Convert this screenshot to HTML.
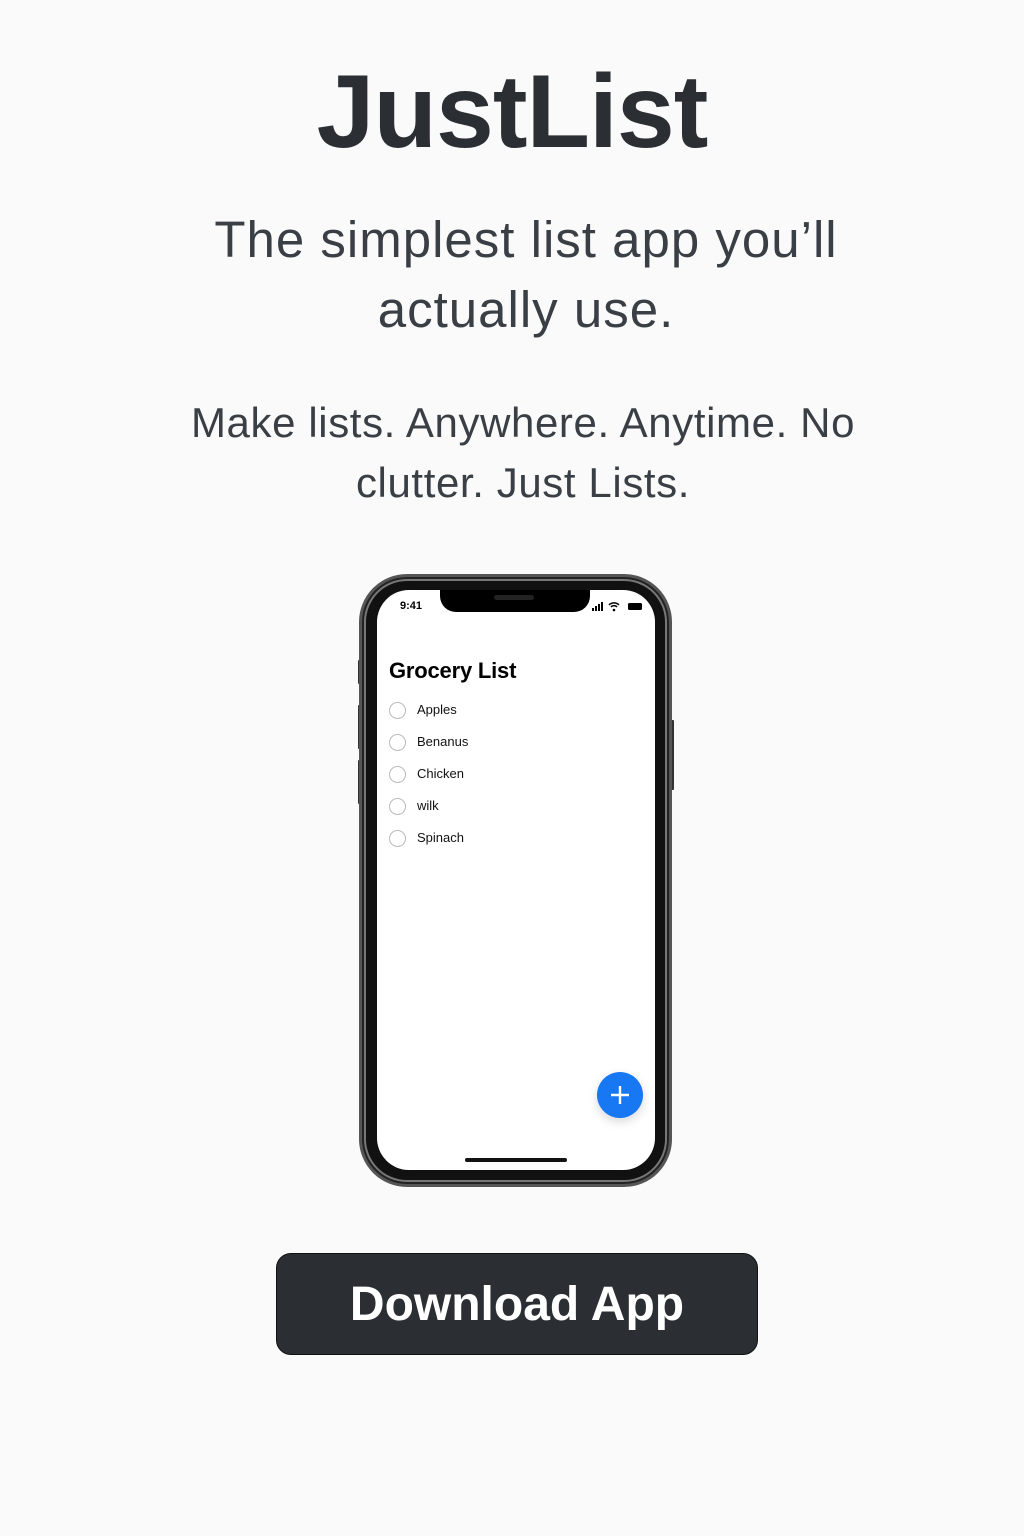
<!DOCTYPE html>
<html><head><meta charset="utf-8"><style>
*{margin:0;padding:0;box-sizing:border-box}
body{width:1024px;height:1536px;background:#fafafa;position:relative;overflow:hidden;font-family:"Liberation Sans",sans-serif;color:#2b2f33}
.c{position:absolute;left:0;width:1024px;text-align:center}
h1{font-size:104px;font-weight:bold;letter-spacing:-1px;top:57px;line-height:110px;left:-3px}
.sub{font-size:51px;line-height:70px;top:205px;color:#3a3f45;letter-spacing:1px;left:14px}
.tag{font-size:42px;line-height:60px;top:393px;color:#3a3f45;letter-spacing:0.6px;left:11px}
.phone{position:absolute;left:359px;top:574px;width:313px;height:613px;border-radius:48px;background:#111;border:3px solid #555;box-shadow:inset 0 0 0 2px #222,inset 0 0 0 4px #777}
.screen{position:absolute;left:377px;top:590px;width:278px;height:580px;background:#fff;border-radius:32px;overflow:hidden}
.notch{position:absolute;left:63px;top:0;width:150px;height:22px;background:#000;border-radius:0 0 16px 16px}
.btn{position:absolute;left:358px;width:3px;background:#333;border-radius:1px}
.item{position:absolute;left:12px;font-size:13px;color:#111;height:18px;line-height:18px}
.item span{display:inline-block;width:17px;height:17px;border:1px solid #bbb;border-radius:50%;vertical-align:middle;margin-right:11px}
.dl{position:absolute;left:276px;top:1253px;width:482px;height:102px;background:#2b2f33;border:1px solid #111;border-radius:15px;color:#fff;font-size:48px;font-weight:bold;text-align:center;line-height:102px}
</style></head><body>
<h1 class="c">JustList</h1>
<div class="c sub">The simplest list app you’ll<br>actually use.</div>
<div class="c tag">Make lists. Anywhere. Anytime. No<br>clutter. Just Lists.</div>
<div class="btn" style="top:660px;height:24px"></div>
<div class="btn" style="top:705px;height:44px"></div>
<div class="btn" style="top:760px;height:44px"></div>
<div class="btn" style="left:671px;top:720px;height:70px"></div>
<div class="phone"></div>
<div class="screen">
 <div class="notch"><div style="position:absolute;left:54px;top:5px;width:40px;height:5px;background:#222;border-radius:3px"></div></div>
 <div style="position:absolute;left:23px;top:10px;font-size:11px;font-weight:bold;color:#000">9:41</div>
 <svg style="position:absolute;left:215px;top:12px" width="52" height="10"><rect x="0" y="6" width="2" height="3" fill="#000"/><rect x="3" y="4" width="2" height="5" fill="#000"/><rect x="6" y="2" width="2" height="7" fill="#000"/><rect x="9" y="0" width="2" height="9" fill="#000"/><path d="M17 3a7 7 0 0 1 10 0M19 5a4 4 0 0 1 6 0" stroke="#000" stroke-width="1.5" fill="none"/><circle cx="22" cy="8" r="1.3" fill="#000"/><rect x="36" y="1" width="14" height="7" rx="1.5" fill="#000"/></svg>
 <div style="position:absolute;left:12px;top:68px;font-size:22px;font-weight:bold;color:#000;letter-spacing:-0.2px">Grocery List</div>
 <div class="item" style="top:111px"><span></span>Apples</div>
 <div class="item" style="top:143px"><span></span>Benanus</div>
 <div class="item" style="top:175px"><span></span>Chicken</div>
 <div class="item" style="top:207px"><span></span>wilk</div>
 <div class="item" style="top:239px"><span></span>Spinach</div>
 <div style="position:absolute;left:220px;top:482px;width:46px;height:46px;border-radius:50%;background:#1877f2;box-shadow:0 4px 10px rgba(0,0,0,.15)"><svg width="46" height="46"><path d="M23 14v18M14 23h18" stroke="#fff" stroke-width="2.4"/></svg></div>
 <div style="position:absolute;left:88px;top:568px;width:102px;height:4px;background:#111;border-radius:2px"></div>
</div>
<div class="dl">Download App</div>
</body></html>
